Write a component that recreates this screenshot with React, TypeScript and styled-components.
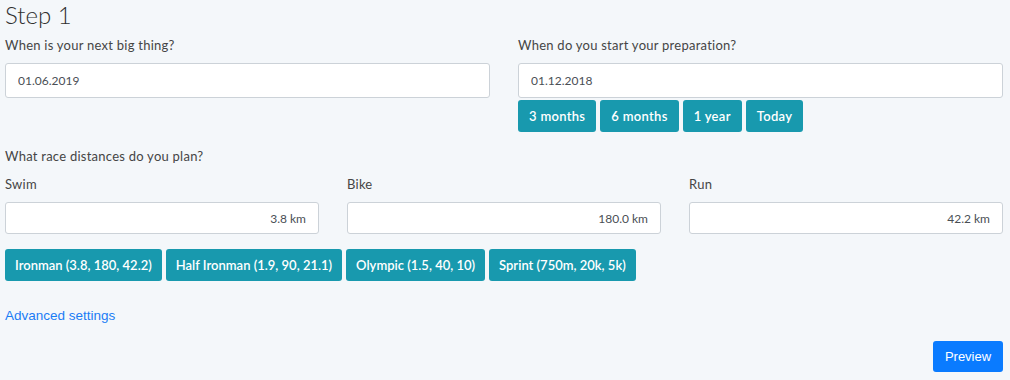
import styled, { createGlobalStyle } from "styled-components";

const GlobalStyle = createGlobalStyle`
    html, body {
        margin: 0;
        padding: 0;
        background: #f4f7fa;
    }
    body {
        font-family: Lato, "Open Sans", sans-serif;
        color: #3d3d3d;
    }
    * {
        box-sizing: border-box;
    }
`;

const Page = styled.div`
    padding: 0 7px 0 5px;
    width: 1010px;
    height: 380px;
    overflow: hidden;
`;

const Title = styled.h1`
    margin: 0;
    font-size: 24px;
    line-height: 30px;
    font-weight: 300;
    color: #2f2f2f;
`;

const Columns = styled.div<{ $count: number }>`
    display: grid;
    grid-template-columns: repeat(${(p) => p.$count}, 1fr);
    column-gap: 28px;
`;

const Field = styled.div`
    display: flex;
    flex-direction: column;
`;

const Label = styled.label<{ $top?: number }>`
    display: block;
    margin-top: ${(p) => p.$top ?? 0}px;
    font-size: 13px;
    line-height: 20px;
    letter-spacing: 0.25px;
    color: #454545;
`;

const Input = styled.input<{ $height: number; $align?: string }>`
    margin-top: 8px;
    width: 100%;
    height: ${(p) => p.$height}px;
    padding: 0 12px;
    border: 1px solid #ccd2d8;
    border-radius: 3px;
    background: #fff;
    font-family: Lato, sans-serif;
    font-size: 12px;
    color: #4a4f55;
    text-align: ${(p) => p.$align ?? "left"};
    outline: none;
`;

const ButtonRow = styled.div<{ $top: number }>`
    display: flex;
    gap: 4px;
    margin-top: ${(p) => p.$top}px;
`;

const InfoButton = styled.button<{ $pad: number; $spacing?: number }>`
    height: 32px;
    padding: 0 ${(p) => p.$pad}px;
    border: none;
    border-radius: 3px;
    background: #1899ae;
    color: #fff;
    font-family: Lato, sans-serif;
    font-size: 13px;
    font-weight: 600;
    letter-spacing: ${(p) => p.$spacing ?? 0}px;
    cursor: pointer;
`;

const Link = styled.a`
    display: block;
    margin-top: 25px;
    font-family: "Liberation Sans", Arial, sans-serif;
    font-size: 13.5px;
    line-height: 20px;
    color: #1a7cf5;
    text-decoration: none;
`;

const Footer = styled.div`
    display: flex;
    justify-content: flex-end;
    margin-top: 15px;
`;

const PrimaryButton = styled.button`
    height: 31px;
    width: 70px;
    border: none;
    border-radius: 3px;
    background: #0a7bff;
    color: #fff;
    font-family: "Liberation Sans", Arial, sans-serif;
    font-size: 13px;
    cursor: pointer;
`;

const periods = ["3 months", "6 months", "1 year", "Today"];
const presets = [
	"Ironman (3.8, 180, 42.2)",
	"Half Ironman (1.9, 90, 21.1)",
	"Olympic (1.5, 40, 10)",
	"Sprint (750m, 20k, 5k)",
];
const distances = [
	{ name: "Swim", value: "3.8 km" },
	{ name: "Bike", value: "180.0 km" },
	{ name: "Run", value: "42.2 km" },
];

export default function App() {
	return (
		<>
			<GlobalStyle />
			<Page>
				<Title>Step 1</Title>
				<Columns $count={2}>
					<Field>
						<Label $top={5}>When is your next big thing?</Label>
						<Input $height={35} defaultValue="01.06.2019" />
					</Field>
					<Field>
						<Label $top={5}>When do you start your preparation?</Label>
						<Input $height={35} defaultValue="01.12.2018" />
						<ButtonRow $top={2}>
							{periods.map((p) => (
								<InfoButton key={p} $pad={11} $spacing={0.3}>
									{p}
								</InfoButton>
							))}
						</ButtonRow>
					</Field>
				</Columns>
				<Label $top={14}>What race distances do you plan?</Label>
				<Columns $count={3}>
					{distances.map((d) => (
						<Field key={d.name}>
							<Label $top={8}>{d.name}</Label>
							<Input $height={32} $align="right" defaultValue={d.value} />
						</Field>
					))}
				</Columns>
				<ButtonRow $top={15}>
					{presets.map((p) => (
						<InfoButton key={p} $pad={10}>
							{p}
						</InfoButton>
					))}
				</ButtonRow>
				<Link href="#">Advanced settings</Link>
				<Footer>
					<PrimaryButton>Preview</PrimaryButton>
				</Footer>
			</Page>
		</>
	);
}
